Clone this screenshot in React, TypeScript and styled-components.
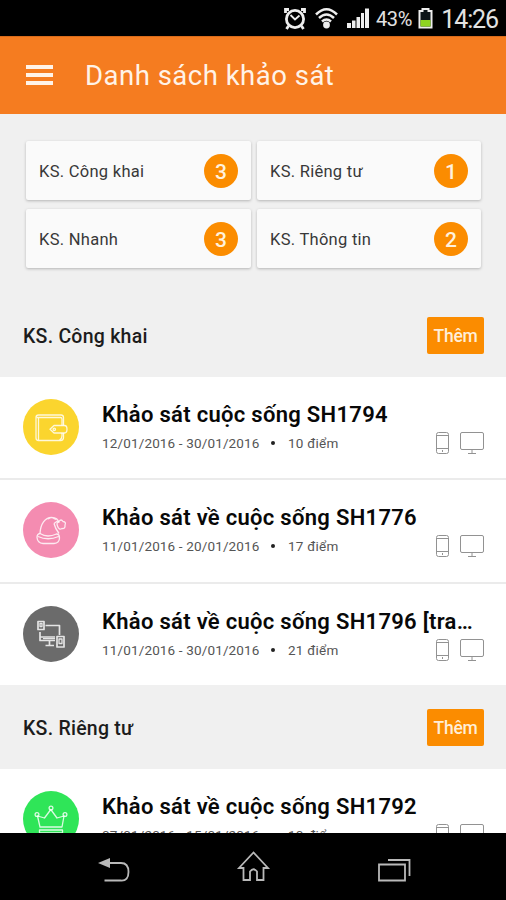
import React from "react";
import styled, { createGlobalStyle } from "styled-components";

const GlobalStyle = createGlobalStyle`
  * { box-sizing: border-box; }
  body { margin: 0; font-family: Roboto, "Noto Sans", sans-serif; background: #000; }
`;

const Screen = styled.div`
  width: 506px;
  height: 900px;
  display: flex;
  flex-direction: column;
  overflow: hidden;
  background: #f0f0f0;
`;

const StatusBar = styled.div`
  height: 36px;
  flex: none;
  display: flex;
  align-items: center;
  justify-content: flex-end;
  padding-right: 8px;
  background: #000;
  color: #e2e2e2;
`;

const StatusIcons = styled.svg`
  display: block;
  width: 90px;
  height: 36px;
`;

const BatteryPercent = styled.span`
  width: 46px;
  padding: 2px 0 0 5px;
  font-size: 20px;
  line-height: 36px;
  letter-spacing: -0.4px;
`;

const BatteryIcon = styled.svg`
  display: block;
  width: 16px;
  height: 36px;
`;

const Clock = styled.span`
  width: 65px;
  padding-top: 3px;
  text-align: right;
  font-size: 25px;
  line-height: 34px;
  letter-spacing: -1.1px;
`;

const AppBar = styled.header`
  height: 78px;
  flex: none;
  display: flex;
  align-items: center;
  padding-left: 26px;
  background: #f57c20;
  border-top: 1px solid #d86b1b;
`;

const MenuButton = styled.button`
  width: 28px;
  height: 20px;
  margin-top: -2px;
  padding: 0;
  border: 0;
  background: none;
  display: flex;
  flex-direction: column;
  justify-content: space-between;
`;

const MenuBar = styled.span`
  width: 27px;
  height: 4px;
  background: #fff3e8;
`;

const PageTitle = styled.h1`
  margin: 0 0 0 31px;
  font-size: 27.5px;
  font-weight: 400;
  line-height: 40px;
  letter-spacing: 0.5px;
  color: #fff3e8;
`;

const Content = styled.main`
  flex: 1;
  min-height: 0;
  overflow: hidden;
`;

const CategoryGrid = styled.div`
  display: grid;
  grid-template-columns: 225px 224px;
  grid-auto-rows: 59px;
  gap: 9px 6px;
  padding: 27px 0 0 26px;
`;

const CategoryCard = styled.div`
  display: flex;
  align-items: center;
  justify-content: space-between;
  padding: 0 13px;
  background: #fafafa;
  border-radius: 2px;
  box-shadow: 0 1px 3px rgba(0, 0, 0, 0.25);
`;

const CategoryName = styled.span`
  padding-top: 2px;
  font-size: 16.5px;
  letter-spacing: 0.28px;
  color: #383838;
`;

const CountBadge = styled.span`
  width: 34px;
  height: 34px;
  border-radius: 50%;
  background: #fb8c00;
  color: #fff1dd;
  font-size: 21px;
  font-weight: 500;
  line-height: 36px;
  text-align: center;
`;

const SectionHeader = styled.div<{ $top: number }>`
  margin-top: ${(p) => p.$top}px;
  height: 84px;
  display: flex;
  align-items: center;
  justify-content: space-between;
  padding: 1px 22px 0 23px;
`;

const SectionTitle = styled.h2`
  margin: 2px 0 0;
  font-size: 19.5px;
  font-weight: 500;
  letter-spacing: 0.25px;
  color: #1c1c1c;
`;

const AddButton = styled.button`
  width: 57px;
  height: 37px;
  padding: 1px 0 0;
  border: 0;
  border-radius: 2px;
  background: #fb8c00;
  color: #ffeed8;
  font: 500 17.5px Roboto, sans-serif;
  letter-spacing: -0.3px;
`;

const SurveyList = styled.div`
  background: #fff;
`;

const SurveyRow = styled.article`
  height: 103.4px;
  display: flex;
  padding: 22px 21px 0 23px;
  border-bottom: 2px solid #ebebeb;

  &:last-child {
    height: 101.5px;
    border-bottom: 0;
  }
`;

const SurveyIcon = styled.svg<{ $color: string }>`
  flex: none;
  width: 56px;
  height: 56px;
  border-radius: 50%;
  background: ${(p) => p.$color};
  fill: none;
  stroke: #ffffff;
  stroke-opacity: 0.82;
  stroke-width: 1.3;
  stroke-linejoin: round;
`;

const SurveyText = styled.div`
  flex: 1;
  min-width: 0;
  margin-left: 23px;
`;

const SurveyTitle = styled.h3`
  margin: 0;
  white-space: nowrap;
  font-size: 22px;
  font-weight: 600;
  line-height: 32px;
  letter-spacing: 0.3px;
  color: #080808;
`;

const SurveyMeta = styled.div`
  display: flex;
  justify-content: space-between;
`;

const MetaText = styled.div`
  display: flex;
  font-size: 13.5px;
  line-height: 24px;
  letter-spacing: 0.25px;
  white-space: nowrap;
  color: #555;
`;

const Dates = styled.span`
  width: 169px;
  letter-spacing: 0.15px;
`;

const Dot = styled.span`
  width: 4px;
  height: 4px;
  margin: 10px 13px 0 0;
  border-radius: 50%;
  background: #222;
`;

const Devices = styled.svg`
  flex: none;
  width: 50px;
  height: 28px;
  fill: none;
  stroke: #929292;
  stroke-width: 1;
`;

const NavBar = styled.nav`
  height: 67px;
  flex: none;
  display: flex;
  justify-content: center;
  background: #000;
`;

const NavIcon = styled.svg`
  width: 140px;
  height: 67px;
  fill: none;
  stroke: #b9b9b9;
  stroke-width: 1.8;
`;

type Kind = "wallet" | "hat" | "network" | "crown";

const glyphColors: Record<Kind, string> = {
  wallet: "#fbd52e",
  hat: "#f48cb1",
  network: "#6b6b6b",
  crown: "#2fe558",
};

const glyphs: Record<Kind, React.ReactNode> = {
  wallet: (
    <>
      <path d="M40.500 26.500V18.500Q40.500 16 38 16H15.500Q13 16 13 18.500V39Q13 41.500 15.500 41.500H37.500Q40.500 41.500 40.500 38.500V34" />
      <path d="M13.500 18.500H37.500Q39 18.500 39 20V26.500M15.500 18.500V41M39 34V37Q39 39.500 36.500 41" />
      <path d="M31 26.500H41.500Q44 26.500 44 30.200T41.500 34H31L27 30.300Z" />
      <circle cx="31.300" cy="30.300" r="1.200" />
    </>
  ),
  hat: (
    <>
      <path d="M17 31.500C17.500 22 22 15.500 28.500 15.500Q35 15.500 36 21M31 21.500Q32 26 36 31.500M25 17L28.500 15.500 33 17.500M31 21.500L34.500 19" />
      <path d="M17 31.500Q14 32 14 35.500Q14.500 41 20 41.500H31Q36.500 41 36.500 36Q36.500 32 33.500 32Q29 34 25 34T17 31.500ZM15 34.500Q25 39 35.500 34.500" />
      <path d="M34.500 24Q33 20.500 36 19.500Q38 16.500 40 19.500Q43.500 20 42 23Q42.500 27 39 26.500Q36 28.500 34.500 24Z" />
    </>
  ),
  network: (
    <>
      <path strokeWidth="1.700" d="M15 15.500H21V23.500H15ZM22.500 19.500H36.500V29M17 26V34.500H32M17.500 31H32M26.500 35V39M22.500 39.500H31M34 30.500H41V41H34Z" />
      <path d="M17 17.500H19V20.500H17ZM36 33H39V37.500H36ZM20 32.700H32" />
    </>
  ),
  crown: (
    <>
      <path d="M17 36L14.500 25L21.500 27L27.800 18.500L34 27L41 25L39 36Z" />
      <circle cx="14" cy="23.500" r="1.900" />
      <circle cx="28" cy="17" r="1.900" />
      <circle cx="42" cy="23.500" r="1.900" />
      <path d="M16.500 39H39.500V42H16.500Z" />
    </>
  ),
};

interface Survey {
  kind: Kind;
  title: string;
  dates: string;
  points: string;
}

const publicSurveys: Survey[] = [
  { kind: "wallet", title: "Khảo sát cuộc sống SH1794", dates: "12/01/2016 - 30/01/2016", points: "10 điểm" },
  { kind: "hat", title: "Khảo sát về cuộc sống SH1776", dates: "11/01/2016 - 20/01/2016", points: "17 điểm" },
  { kind: "network", title: "Khảo sát về cuộc sống SH1796 [tra…", dates: "11/01/2016 - 30/01/2016", points: "21 điểm" },
];

const privateSurveys: Survey[] = [
  { kind: "crown", title: "Khảo sát về cuộc sống SH1792", dates: "07/01/2016 - 15/01/2016", points: "10 điểm" },
];

const categories = [
  { name: "KS. Công khai", count: 3 },
  { name: "KS. Riêng tư", count: 1 },
  { name: "KS. Nhanh", count: 3 },
  { name: "KS. Thông tin", count: 2 },
];

function SurveyItem({ kind, title, dates, points }: Survey) {
  return (
    <SurveyRow>
      <SurveyIcon $color={glyphColors[kind]} viewBox="0 0 56 56">
        {glyphs[kind]}
      </SurveyIcon>
      <SurveyText>
        <SurveyTitle>{title}</SurveyTitle>
        <SurveyMeta>
          <MetaText>
            <Dates>{dates}</Dates>
            <Dot />
            {points}
          </MetaText>
          <Devices viewBox="0 0 50 28">
            <rect x="1.500" y="1.500" width="12" height="21" rx="2" />
            <path d="M1.500 4.500H13.500M1.500 17.500H13.500M7.500 19V21" />
            <rect x="25.500" y="1.500" width="23" height="17" rx="1.500" />
            <path d="M37 18.500V22.500M33 22.500H41" />
          </Devices>
        </SurveyMeta>
      </SurveyText>
    </SurveyRow>
  );
}

export default function App() {
  return (
    <>
      <GlobalStyle />
      <Screen>
        <StatusBar>
          <StatusIcons viewBox="281 0 90 36">
            <g fill="none" stroke="#eee" strokeWidth="2.800">
              <circle cx="295" cy="19" r="8.600" />
              <path d="M285.500 13V9.500H289M301 9.500H304.500V13M288.500 26L286.500 29M301.500 26L303.500 29" />
              <path strokeWidth="1.800" d="M290.500 15L295 19.500L299.500 15.500" />
              <path strokeWidth="2.500" d="M316 14.500Q326.500 4 337 14.500M319 18Q326.500 11 334 18M322 21.500Q326.500 17.500 331 21.500" />
            </g>
            <circle cx="326.500" cy="25" r="3.400" fill="#eee" />
            <path fill="#eee" d="M347 23H351V28H347ZM352 20.500H355.500V28H352ZM356.500 17H360V28H356.500ZM361 13H364V28H361ZM365 8.500H369V28H365Z" />
          </StatusIcons>
          <BatteryPercent>43%</BatteryPercent>
          <BatteryIcon viewBox="417.500 0 16 36">
            <path fill="#0d1518" stroke="#eee" strokeWidth="2" d="M420 11H423V9H429V11H432V27.500H420Z" />
            <path fill="#8ed321" d="M421 20H431V26.500H421Z" />
          </BatteryIcon>
          <Clock>14:26</Clock>
        </StatusBar>
        <AppBar>
          <MenuButton aria-label="Menu">
            <MenuBar />
            <MenuBar />
            <MenuBar />
          </MenuButton>
          <PageTitle>Danh sách khảo sát</PageTitle>
        </AppBar>
        <Content>
          <CategoryGrid>
            {categories.map((c) => (
              <CategoryCard key={c.name}>
                <CategoryName>{c.name}</CategoryName>
                <CountBadge>{c.count}</CountBadge>
              </CategoryCard>
            ))}
          </CategoryGrid>
          <SectionHeader $top={25}>
            <SectionTitle>KS. Công khai</SectionTitle>
            <AddButton>Thêm</AddButton>
          </SectionHeader>
          <SurveyList>
            {publicSurveys.map((s) => (
              <SurveyItem key={s.title} {...s} />
            ))}
          </SurveyList>
          <SectionHeader $top={0}>
            <SectionTitle>KS. Riêng tư</SectionTitle>
            <AddButton>Thêm</AddButton>
          </SectionHeader>
          <SurveyList>
            {privateSurveys.map((s) => (
              <SurveyItem key={s.title} {...s} />
            ))}
          </SurveyList>
        </Content>
        <NavBar>
          <NavIcon viewBox="43 833 140 67">
            <path d="M108 863H121Q128.500 863 128.500 872T121 880.500H104.500" />
            <path d="M98 863L110 858V868Z" fill="#b9b9b9" stroke="none" />
          </NavIcon>
          <NavIcon viewBox="183 833 140 67">
            <path d="M243.500 880V868H239L253.500 852.500L268 868H263.500V880H257V871.500Q253.500 867 250 871.500V880Z" />
          </NavIcon>
          <NavIcon viewBox="323 833 140 67">
            <path d="M379 864.500H405V880.500H379ZM388 860H409.500V876" />
          </NavIcon>
        </NavBar>
      </Screen>
    </>
  );
}
